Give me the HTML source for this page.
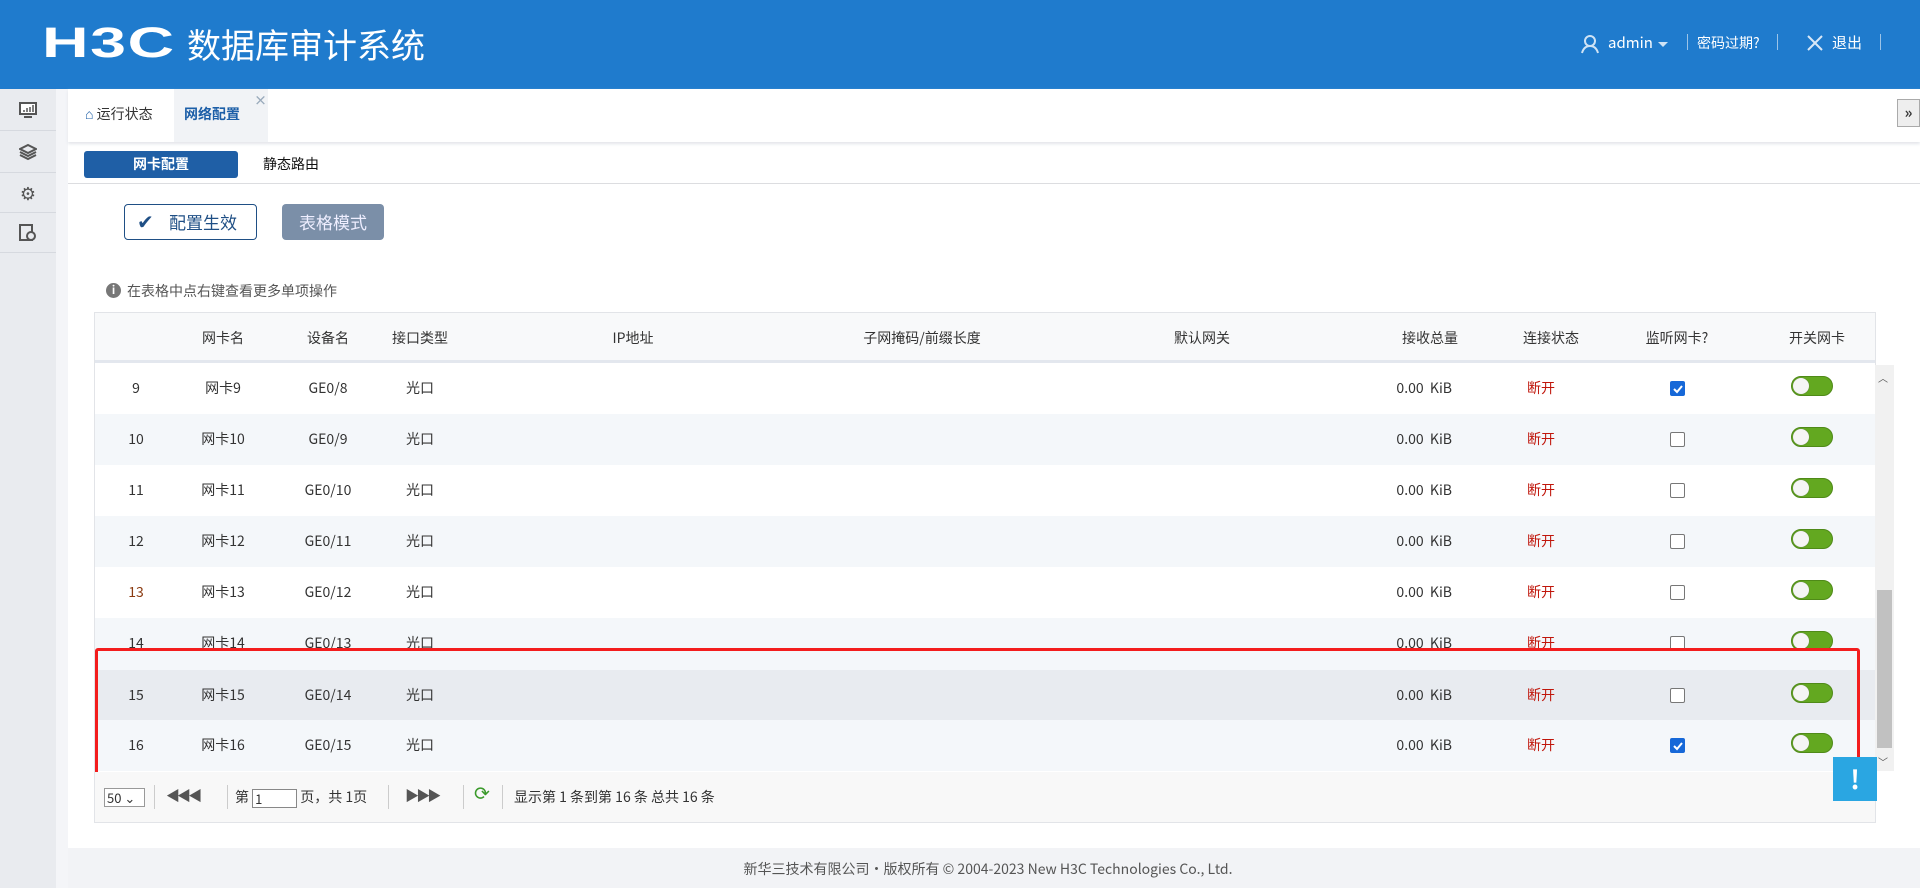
<!DOCTYPE html>
<html><head><meta charset="utf-8"><style>
*{box-sizing:border-box;margin:0;padding:0}
body{width:1920px;height:888px;overflow:hidden;background:#f2f3f6;font-family:"Noto Sans CJK SC","Liberation Sans",sans-serif;font-size:14px;color:#333;position:relative;line-height:20px}
.abs{position:absolute}
#hdr{left:0;top:0;width:1920px;height:89px;background:#1f7bcd;color:#fff}
#side{left:0;top:89px;width:56px;height:799px;background:#e9ebef}
.sic{position:absolute;left:0;width:56px;height:50px;border-bottom:1px solid #d6d9df;display:flex;align-items:center;justify-content:center}
#main{left:68px;top:89px;width:1852px;height:759px;background:#fff}
.th,.td{position:absolute;transform:translateX(-50%);white-space:nowrap}
.row{position:absolute;left:95px;width:1780px;height:51px}
.tog{position:absolute;left:1791px;width:42px;height:20px;border-radius:10px;background:#63a820;border:1px solid #4f8a18}
.tog:after{content:"";position:absolute;left:1px;top:1px;width:16px;height:16px;border-radius:50%;background:#f5f5f5;box-shadow:0 0 1px #666}
.cb{position:absolute;left:1670px;width:15px;height:15px;border:1px solid #777;border-radius:2px;background:#fff}
.cb.on{background:#1668d8;border-color:#1668d8}
</style></head><body>
<div id="hdr" class="abs">
 <div class="abs" style="left:42px;top:20px;font-family:'Liberation Sans',sans-serif;font-weight:bold;font-size:43px;letter-spacing:1px;transform:scaleX(1.5);transform-origin:left;line-height:46px">H3C</div>
 <div class="abs" style="left:187px;top:22px;font-size:34px;line-height:44px">数据库审计系统</div>
 <svg class="abs" style="left:1580px;top:34px" width="20" height="20" viewBox="0 0 20 20"><circle cx="10" cy="7" r="5" fill="none" stroke="#cfe3f5" stroke-width="2"/><path d="M2 19 Q4 12 10 12 Q16 12 18 19" fill="none" stroke="#cfe3f5" stroke-width="2"/></svg>
 <div class="abs" style="left:1608px;top:33px;font-size:15px">admin</div>
 <div class="abs" style="left:1658px;top:42px;border:5px solid transparent;border-top:5px solid #cfe3f5"></div>
 <div class="abs" style="left:1687px;top:34px;width:1px;height:16px;background:#9cc4e8"></div>
 <div class="abs" style="left:1697px;top:33px;font-size:14px">密码过期?</div>
 <div class="abs" style="left:1777px;top:34px;width:1px;height:16px;background:#9cc4e8"></div>
 <svg class="abs" style="left:1807px;top:35px" width="16" height="16"><path d="M1 1L15 15M15 1L1 15" stroke="#d8e8f7" stroke-width="2"/></svg>
 <div class="abs" style="left:1832px;top:33px;font-size:15px">退出</div>
 <div class="abs" style="left:1880px;top:34px;width:1px;height:16px;background:#9cc4e8"></div>
</div>
<div id="side" class="abs">
 <div class="sic" style="top:0;height:42px"><svg width="18" height="16"><rect x="1" y="1" width="16" height="11" fill="#fff" stroke="#555" stroke-width="2"/><path d="M5 10v-2M8 10v-4M11 10v-5M14 10v-7" stroke="#555" stroke-width="1.5"/><path d="M5 15h8" stroke="#555" stroke-width="2"/></svg></div>
 <div class="sic" style="top:42px;height:42px"><svg width="18" height="18"><path d="M9 2L17 6L9 10L1 6Z M1 9L9 13L17 9 M1 12L9 16L17 12" fill="none" stroke="#555" stroke-width="2"/></svg></div>
 <div class="sic" style="top:84px;height:40px"><span style="font-size:18px;color:#555">⚙</span></div>
 <div class="sic" style="top:124px;height:40px"><svg width="18" height="18"><rect x="1" y="1" width="12" height="15" fill="none" stroke="#555" stroke-width="2"/><circle cx="12" cy="12" r="4" fill="#e9ebef" stroke="#555" stroke-width="2"/></svg></div>
 <div class="abs" style="left:57px;top:369px;color:#667;font-size:14px;font-weight:bold">›</div>
</div>
<div class="abs" style="left:56px;top:89px;width:12px;height:799px;background:#f4f5f8"></div>
<div id="main" class="abs"></div>
<div class="abs" style="left:68px;top:89px;width:1852px;height:53px;background:#fff;box-shadow:0 2px 3px #e3e5ea"></div>
<div class="abs" style="left:85px;top:104px;font-size:14px;color:#333"><span style="color:#1d5fa8">⌂</span> 运行状态</div>
<div class="abs" style="left:174px;top:89px;width:94px;height:53px;background:#f1f3f6"></div>
<div class="abs" style="left:184px;top:104px;font-size:14px;color:#1d5fa8;font-weight:bold">网络配置</div>
<div class="abs" style="left:254px;top:90px;font-size:13px;color:#9ab;font-weight:bold">×</div>
<div class="abs" style="left:1897px;top:99px;width:23px;height:28px;background:#eee;border:1px solid #aaa;font-size:15px;text-align:center;line-height:26px;font-weight:bold">»</div>
<div class="abs" style="left:84px;top:151px;width:154px;height:27px;background:#1f5fa6;border-radius:3px;color:#fff;font-weight:bold;text-align:center;line-height:27px">网卡配置</div>
<div class="abs" style="left:263px;top:154px;font-size:14px;color:#111">静态路由</div>
<div class="abs" style="left:68px;top:183px;width:1852px;height:1px;background:#dcdde0"></div>
<div class="abs" style="left:124px;top:204px;width:133px;height:36px;border:1px solid #1f4f85;border-radius:4px;color:#1f4f85;font-size:17px;line-height:34px;padding-left:44px">配置生效<span class="abs" style="left:12px;top:-1px;font-size:20px">✔</span></div>
<div class="abs" style="left:282px;top:204px;width:102px;height:36px;background:#7b8fa8;border-radius:4px;color:#eef;font-size:17px;line-height:36px;text-align:center">表格模式</div>
<div class="abs" style="left:106px;top:283px;width:15px;height:15px;border-radius:50%;background:#777;color:#fff;font-size:11px;text-align:center;line-height:15px;font-weight:bold">i</div>
<div class="abs" style="left:127px;top:281px;font-size:14px;color:#555">在表格中点右键查看更多单项操作</div>
<div class="abs" style="left:94px;top:312px;width:1782px;height:511px;border:1px solid #e2e4e8;background:#fff"></div>
<div class="abs" style="left:95px;top:313px;width:1780px;height:50px;background:#f8f9fa;border-bottom:3px solid #e3e7ee"></div>
<div class="abs" style="top:328px;left:0;width:1920px">
 <span class="th" style="left:223px">网卡名</span><span class="th" style="left:328px">设备名</span><span class="th" style="left:420px">接口类型</span><span class="th" style="left:633px">IP地址</span><span class="th" style="left:922px">子网掩码/前缀长度</span><span class="th" style="left:1202px">默认网关</span><span class="th" style="left:1430px">接收总量</span><span class="th" style="left:1551px">连接状态</span><span class="th" style="left:1677px">监听网卡?</span><span class="th" style="left:1817px">开关网卡</span>
</div>
<div id="rows"></div>
<script>
var h='';var ck={9:1,16:1};
for(var i=9;i<=16;i++){var t=363+(i-9)*51;if(i==15)t=670;if(i==16)t=720;
var bg=(i==15)?'#e8ebf0':(i%2?'#fff':'#f4f7fa');
h+='<div class="row" style="top:'+t+'px;background:'+bg+'"></div>';
var y=t+15;
h+='<span class="td abs" style="top:'+y+'px;left:136px;'+(i==13?'color:#8a3a10':'')+'">'+i+'</span>';
h+='<span class="td abs" style="top:'+y+'px;left:223px">网卡'+i+'</span>';
h+='<span class="td abs" style="top:'+y+'px;left:328px">GE0/'+(i-1)+'</span>';
h+='<span class="td abs" style="top:'+y+'px;left:420px">光口</span>';
h+='<span class="abs" style="top:'+y+'px;left:1380px;width:72px;text-align:right;white-space:nowrap">0.00&nbsp; KiB</span>';
h+='<span class="td abs" style="top:'+y+'px;left:1541px;color:#c0160b">断开</span>';
h+='<span class="cb abs'+(ck[i]?' on':'')+'" style="top:'+(t+18)+'px">'+(ck[i]?'<svg width="13" height="13" style="position:absolute;left:0;top:0"><path d="M3 7l3 3 5-6" stroke="#fff" stroke-width="2" fill="none"/></svg>':'')+'</span>';
h+='<span class="tog" style="top:'+(t+13)+'px"></span>';}
document.getElementById('rows').innerHTML=h;
</script>
<div class="abs" style="left:95px;top:648px;width:1780px;height:22px;background:#f4f7fa"></div>
<div class="abs" style="left:1875px;top:365px;width:19px;height:406px;background:#f1f1f1"></div>
<div class="abs" style="left:1878px;top:368px;font-size:10px;color:#555">︿</div>
<div class="abs" style="left:1877px;top:590px;width:15px;height:158px;background:#c1c1c1"></div>
<div class="abs" style="left:1878px;top:752px;font-size:10px;color:#555">﹀</div>
<div class="abs" style="left:95px;top:648px;width:1765px;height:131px;border:3px solid #f31d1d;border-radius:3px"></div>
<div class="abs" style="left:95px;top:772px;width:1780px;height:50px;background:#f8f8f8"></div>
<div class="abs" style="left:104px;top:788px;width:41px;height:19px;border:1px solid #999;background:#fff;font-size:13px;line-height:17px;padding-left:2px">50 ⌄</div>
<div class="abs" style="left:154px;top:785px;width:1px;height:24px;background:#ccc"></div>
<div class="abs" style="left:166px;top:786px;font-size:14px;color:#555;letter-spacing:-3px">◀◀ &nbsp;◀</div>
<div class="abs" style="left:227px;top:785px;width:1px;height:24px;background:#ccc"></div>
<div class="abs" style="left:235px;top:787px;font-size:14px">第 <span style="display:inline-block;width:45px;height:19px;border:1px solid #888;vertical-align:middle;background:#fff;font-size:13px;line-height:17px;padding-left:2px">1</span> 页，共 1页</div>
<div class="abs" style="left:388px;top:785px;width:1px;height:24px;background:#ccc"></div>
<div class="abs" style="left:405px;top:786px;font-size:14px;color:#555;letter-spacing:-3px">▶ &nbsp;▶▶</div>
<div class="abs" style="left:463px;top:785px;width:1px;height:24px;background:#ccc"></div>
<div class="abs" style="left:474px;top:783px;font-size:19px;color:#3a9a2a">⟳</div>
<div class="abs" style="left:502px;top:785px;width:1px;height:24px;background:#ccc"></div>
<div class="abs" style="left:514px;top:787px;font-size:14px">显示第 1 条到第 16 条 总共 16 条</div>
<div class="abs" style="left:1833px;top:757px;width:44px;height:44px;background:#2aa6e2;color:#fff;font-size:26px;font-weight:bold;text-align:center;line-height:44px">!</div>
<div class="abs" style="left:0;top:859px;width:1920px;text-align:center;font-size:14px;color:#555;padding-left:56px">新华三技术有限公司·版权所有 © 2004-2023 New H3C Technologies Co., Ltd.</div>
</body></html>
